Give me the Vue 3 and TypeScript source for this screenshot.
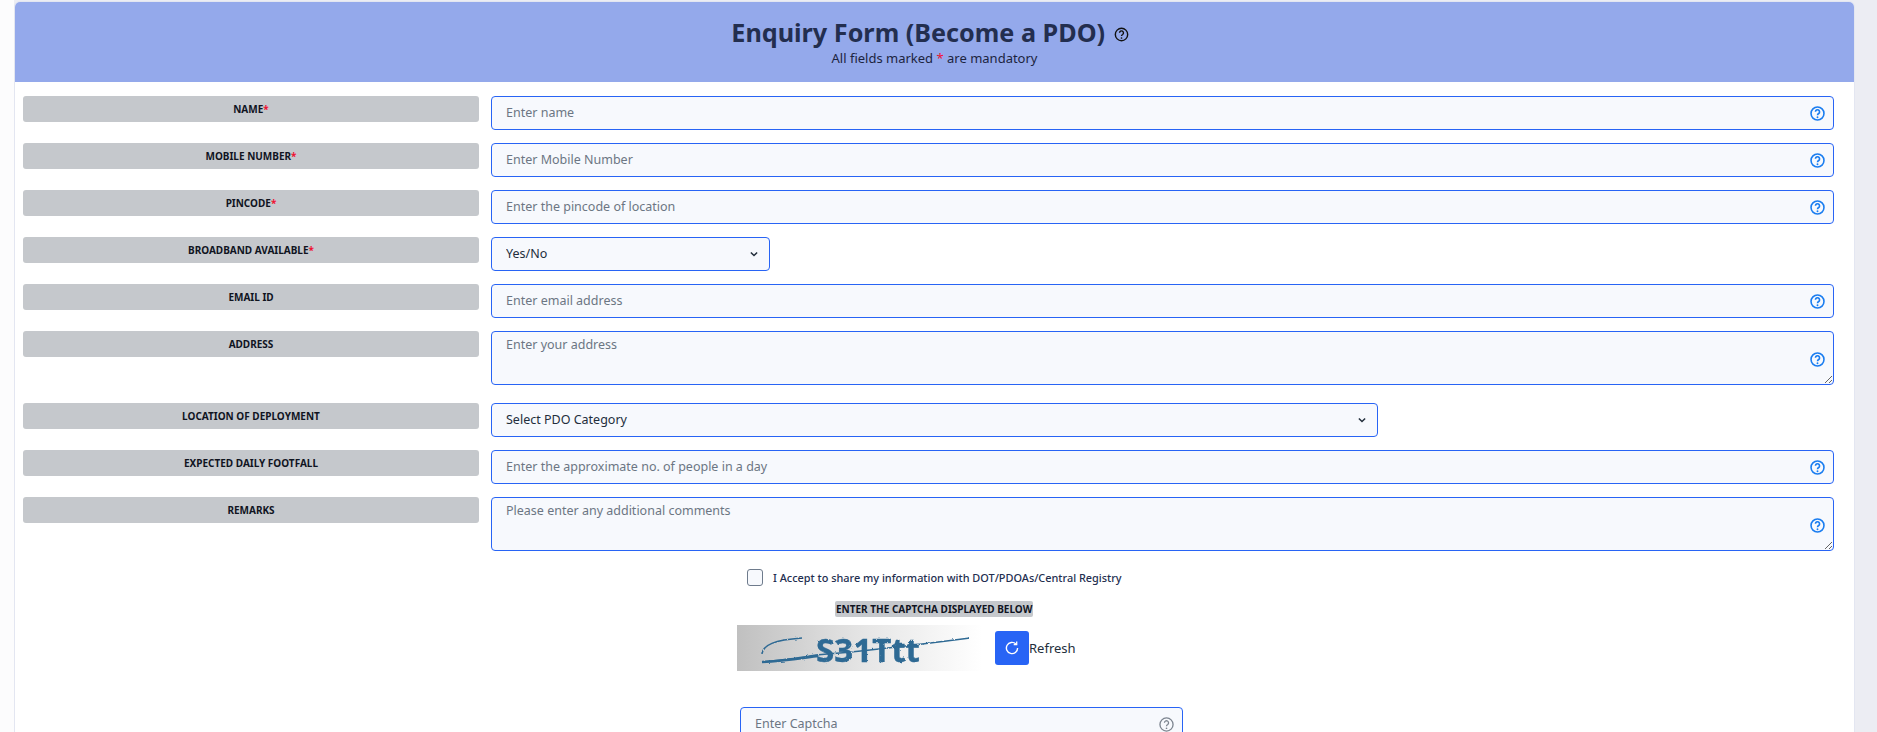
<script setup lang="ts">
import { ref } from 'vue'

interface Field {
  label: string;
  required?: boolean;
  type: 'input' | 'textarea' | 'select';
  placeholder: string;
  size?: 'small' | 'wide';
}

const fields = ref<Field[]>([
  { label: 'Name', required: true, type: 'input', placeholder: 'Enter name' },
  { label: 'Mobile Number', required: true, type: 'input', placeholder: 'Enter Mobile Number' },
  { label: 'Pincode', required: true, type: 'input', placeholder: 'Enter the pincode of location' },
  { label: 'Broadband Available', required: true, type: 'select', placeholder: 'Yes/No', size: 'small' },
  { label: 'Email ID', type: 'input', placeholder: 'Enter email address' },
  { label: 'Address', type: 'textarea', placeholder: 'Enter your address' },
  { label: 'Location of Deployment', type: 'select', placeholder: 'Select PDO Category', size: 'wide' },
  { label: 'Expected Daily Footfall', type: 'input', placeholder: 'Enter the approximate no. of people in a day' },
  { label: 'Remarks', type: 'textarea', placeholder: 'Please enter any additional comments' }
])

const accepted = ref(false)
</script>

<template>
  <div class="page">
    <div class="card">
      <div class="card-header">
        <h1 class="title">
          Enquiry Form (Become a PDO)
          <svg class="title-help" viewBox="0 0 16 16" fill="none" stroke="currentColor">
            <circle cx="8" cy="8" r="6.6" stroke-width="1.5" />
            <path d="M5.9 6.2a2.1 2.1 0 1 1 3.3 1.8c-.7.45-1.2.85-1.2 1.7" stroke-width="1.5" />
            <circle cx="8" cy="11.7" r=".9" fill="currentColor" stroke="none" />
          </svg>
        </h1>
        <p class="subtitle">All fields marked <span class="req">*</span> are mandatory</p>
      </div>

      <div class="card-body">
        <div v-for="field in fields" :key="field.label" class="row" :class="{ 'row-area': field.type === 'textarea' }">
          <div class="field-label">{{ field.label }}<span v-if="field.required" class="req">*</span></div>

          <div v-if="field.type === 'select'" class="control select-wrap" :class="field.size">
            <select class="select">
              <option>{{ field.placeholder }}</option>
            </select>
            <svg class="chevron" viewBox="0 0 16 16" fill="none" stroke="currentColor" stroke-width="2.4">
              <path d="M3 5.5l5 5 5-5" />
            </svg>
          </div>

          <div v-else class="control">
            <textarea v-if="field.type === 'textarea'" class="input area" :placeholder="field.placeholder"></textarea>
            <input v-else class="input" type="text" :placeholder="field.placeholder" />
            <svg class="help" :class="{ 'help-area': field.type === 'textarea' }" viewBox="0 0 16 16" fill="none" stroke="currentColor">
              <circle cx="8" cy="8" r="6.9" stroke-width="1.7" />
              <path d="M5.8 6.1a2.2 2.2 0 1 1 3.5 1.9c-.8.5-1.3.9-1.3 1.8" stroke-width="1.7" />
              <circle cx="8" cy="12" r="1" fill="currentColor" stroke="none" />
            </svg>
          </div>
        </div>

        <div class="consent">
          <input v-model="accepted" class="check" type="checkbox" />
          <span>I Accept to share my information with DOT/PDOAs/Central Registry</span>
        </div>

        <div class="captcha-title"><span>ENTER THE CAPTCHA DISPLAYED BELOW</span></div>

        <div class="captcha-row">
          <svg class="captcha-img" viewBox="0 0 258 46" preserveAspectRatio="none">
            <defs>
              <linearGradient id="captchaBg" x1="0" y1="0" x2="1" y2="0">
                <stop offset="0" stop-color="#c0c0c0" />
                <stop offset=".5" stop-color="#e6e6e6" />
                <stop offset=".95" stop-color="#ffffff" />
              </linearGradient>
              <filter id="captchaRough" x="-5%" y="-20%" width="110%" height="140%">
                <feTurbulence type="fractalNoise" baseFrequency=".35" numOctaves="2" seed="4" />
                <feDisplacementMap in="SourceGraphic" scale="2.5" />
              </filter>
            </defs>
            <rect width="258" height="46" fill="url(#captchaBg)" />
            <g filter="url(#captchaRough)">
              <text x="79" y="37" class="captcha-text" textLength="104" lengthAdjust="spacingAndGlyphs">S31Ttt</text>
              <path d="M25 37c20-2 38-4 54-7 40-3 100-10 154-17" fill="none" stroke="#2f6a94" stroke-width="1.3" />
              <path d="M25 37c22-1 40-4 56-6" fill="none" stroke="#2f6a94" stroke-width="2.6" />
              <path d="M25 29c1-9 12-14 40-16" fill="none" stroke="#2f6a94" stroke-width="1.5" />
            </g>
          </svg>
          <button class="refresh-btn" type="button" aria-label="Refresh">
            <svg viewBox="0 0 16 16" fill="none" stroke="#fff" stroke-width="1.4">
              <path d="M13.6 8A5.6 5.6 0 1 1 11.9 4" />
              <path d="M12.7 1.6v3h-3" stroke-width="1.3" />
            </svg>
          </button>
          <span class="refresh-text">Refresh</span>
        </div>

        <div class="captcha-input control">
          <input class="input" type="text" placeholder="Enter Captcha" />
          <svg class="help grey" viewBox="0 0 16 16" fill="none" stroke="currentColor">
            <circle cx="8" cy="8" r="7" stroke-width="1.4" />
            <path d="M5.8 6.1a2.2 2.2 0 1 1 3.5 1.9c-.8.5-1.3.9-1.3 1.8" stroke-width="1.4" />
            <circle cx="8" cy="12" r=".9" fill="currentColor" stroke="none" />
          </svg>
        </div>
      </div>
    </div>
  </div>
</template>

<style>
html, body {
  margin: 0;
  height: 100%;
  overflow: hidden;
  background: #ecedf3;
}
</style>

<style scoped>
.page {
  height: 732px;
  overflow: hidden;
  padding: 2px 23px 0 15px;
  box-sizing: border-box;
  font-family: "Noto Sans", sans-serif;
  color: #232e3c;
  background: linear-gradient(to right, #fcfcfd 14px, #ecedf3 14px);
}

.card {
  background: #fff;
  border-radius: 5px 5px 0 0;
  height: 800px;
  box-shadow: 0 0 0 1px #e3e6f1;
}

.card-header {
  height: 80px;
  background: #94a9eb;
  border-radius: 5px 5px 0 0;
  text-align: center;
  padding-top: 14px;
  box-sizing: border-box;
}

.title {
  margin: 0;
  font-size: 25.2px;
  line-height: 32px;
  font-weight: 700;
  color: #232e4f;
}

.title-help {
  width: 15px;
  height: 15px;
  margin-left: 2px;
  margin-right: 9px;
  color: #111;
}

.subtitle {
  margin: 0;
  font-size: 13px;
  line-height: 21px;
  color: #1c2440;
}

.req {
  color: #ee1133;
}

.card-body {
  padding: 14px 20px 0 8px;
}

.row {
  display: grid;
  grid-template-columns: 456px 1fr;
  column-gap: 12px;
  align-items: start;
  margin-bottom: 13px;
}

.row-area {
  margin-bottom: 18px;
}

.field-label {
  height: 26px;
  line-height: 27px;
  background: #c5c8cc;
  border-radius: 3px;
  font-size: 10px;
  font-weight: 700;
  text-align: center;
  text-transform: uppercase;
  color: #10141f;
}

.control {
  position: relative;
}

.input,
.select {
  display: block;
  width: 100%;
  height: 34px;
  box-sizing: border-box;
  padding: 0 32px 2px 14px;
  background: #f7f9fd;
  border: 1px solid #2864f5;
  border-radius: 4px;
  font-family: inherit;
  font-size: 12.5px;
  color: #232e3c;
  outline: none;
}

.input::placeholder {
  color: #6c7683;
  opacity: 1;
}

.area {
  height: 54px;
  padding-top: 4px;
  line-height: 18px;
}

.select-wrap.small {
  width: 279px;
}

.select-wrap.wide {
  width: 887px;
}

.select {
  appearance: none;
}

.chevron {
  position: absolute;
  top: 12px;
  right: 11px;
  width: 10px;
  height: 10px;
  color: #232e3c;
  pointer-events: none;
}

.help {
  position: absolute;
  top: 10px;
  right: 9px;
  width: 15px;
  height: 15px;
  color: #1a7df0;
  pointer-events: none;
}

.help-area {
  top: 21px;
}

.help.grey {
  color: #7d8590;
}

.consent {
  display: flex;
  align-items: center;
  gap: 10px;
  padding-left: 724px;
  margin-top: -1px;
  height: 18px;
  font-size: 10.9px;
  font-weight: 500;
  color: #232e4f;
}

.check {
  appearance: none;
  width: 16px;
  height: 17px;
  margin: 0;
  background: #f7f9fd;
  border: 1px solid #6e7b8c;
  border-radius: 3px;
}

.captcha-title {
  margin-top: 16px;
  padding-left: 812px;
  font-size: 10px;
  line-height: 15px;
  font-weight: 700;
  color: #10141f;
}

.captcha-title span {
  background: #c5c8cc;
  border-radius: 2px;
  padding: 1px;
}

.captcha-row {
  display: flex;
  align-items: center;
  margin-top: 8px;
  padding-left: 714px;
}

.captcha-img {
  display: block;
  width: 258px;
  height: 46px;
}

.captcha-text {
  font-family: "Noto Sans", sans-serif;
  font-weight: 700;
  font-size: 33px;
  fill: #2f6a94;
  stroke: #2f6a94;
  stroke-width: .4px;
}

.refresh-btn {
  display: flex;
  align-items: center;
  justify-content: center;
  width: 34px;
  height: 34px;
  padding: 0;
  background: #2864f5;
  border: none;
  border-radius: 3px;
}

.refresh-btn svg {
  width: 16px;
  height: 16px;
}

.refresh-text {
  font-size: 13px;
  color: #232e3c;
}

.captcha-input {
  width: 443px;
  margin-top: 36px;
  margin-left: 717px;
}
</style>
